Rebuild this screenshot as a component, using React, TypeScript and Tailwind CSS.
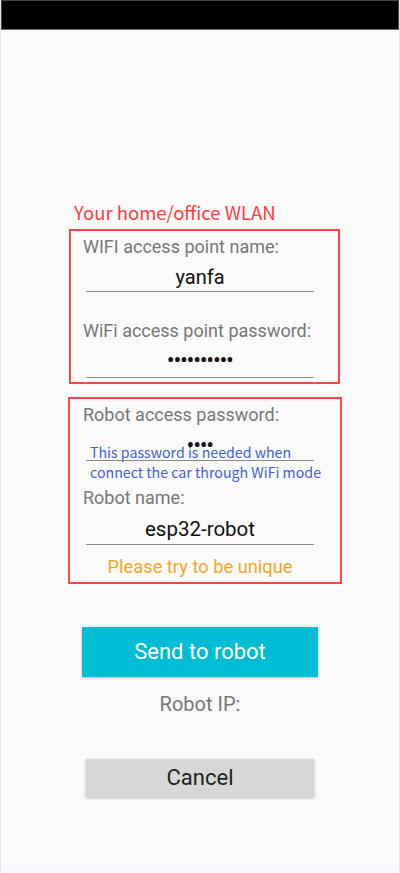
import React from "react";

export default function App() {
  return (
    <div className="w-[400px] h-[873px] bg-[#fafafa] flex flex-col border-x border-[#e4e4e4] overflow-hidden" style={{ fontFamily: "Roboto, 'Noto Sans', sans-serif" }}>
      <div className="h-[30px] shrink-0 bg-black border-t border-x border-[#444] border-b border-b-[#6e6e6e]" />
      <div className="flex-1 flex flex-col">
        <div
          className="mt-[171px] ml-[73px] h-[22px] leading-[22px] text-[18.5px] text-[#ff3c3c]"
          style={{ fontFamily: "'Noto Sans CJK SC', 'Noto Sans', sans-serif" }}
        >
          Your home/office WLAN
        </div>
        <div className="mt-[6px] ml-[68px] w-[271px] border-2 border-[#ff4444] flex flex-col px-[12px] pt-[4px] pb-[4px]">
          <div className="h-[24px] leading-[24px] text-[18px] text-[#777]">WIFI access point name:</div>
          <div className="mt-[4px] ml-[3px] w-[228px] h-[29px] leading-[28px] border-b border-[#8a8a8a] text-center text-[20px] text-[#111]">yanfa</div>
          <div className="mt-[27px] h-[24px] leading-[24px] text-[18px] text-[#777]">WiFi access point password:</div>
          <div className="mt-[1px] ml-[3px] w-[228px] h-[34px] border-b border-[#8a8a8a] flex items-center justify-center pb-[1px]">
            <span className="text-[20px] leading-[20px] text-[#111] tracking-[-0.6px] font-bold">••••••••••</span>
          </div>
        </div>
        <div className="mt-[13px] ml-[67px] w-[274px] border-2 border-[#ff4444] flex flex-col px-[13px] pt-[4px] pb-[3px]">
          <div className="h-[24px] leading-[24px] text-[18px] text-[#777]">Robot access password:</div>
          <div className="relative ml-[3px] w-[228px] h-[34px] border-b border-[#8a8a8a] flex justify-center">
            <span className="mt-[8px] text-[20px] leading-[20px] text-[#111] font-bold tracking-[-0.6px]">••••</span>
            <div
              className="absolute left-[4px] top-[15px] w-[260px] text-[14.2px] leading-[20px] text-[#3f5fda]"
              style={{ fontFamily: "'Noto Sans CJK SC', 'Noto Sans', sans-serif" }}
            >
              This password is needed when
              <br />
              connect the car through WiFi mode
            </div>
          </div>
          <div className="mt-[25px] h-[24px] leading-[24px] text-[18px] text-[#777]">Robot name:</div>
          <div className="mt-[5px] ml-[3px] w-[228px] h-[30px] leading-[28px] border-b border-[#8a8a8a] text-center text-[20.5px] text-[#111]">esp32-robot</div>
          <div className="mt-[10px] ml-[3px] w-[228px] h-[24px] leading-[24px] text-center text-[18.3px] text-[#f6a623]">Please try to be unique</div>
        </div>
        <div className="mt-[43px] ml-[81px] w-[236px] h-[50px] bg-[#00bcd4] shadow-[0_1px_3px_rgba(0,0,0,0.25)] flex items-center justify-center text-white text-[22px] leading-[50px]">
          Send to robot
        </div>
        <div className="mt-[14px] h-[26px] leading-[26px] text-center text-[20px] text-[#777]">Robot IP:</div>
        <div className="mt-[42px] ml-[85px] w-[228px] h-[38px] bg-[#d6d7d7] shadow-[0_1px_3px_rgba(0,0,0,0.25)] flex items-center justify-center text-[#222] text-[22px] leading-[38px]">
          Cancel
        </div>
        <div className="flex-1" />
      </div>
      <div className="h-[7px] shrink-0 bg-[#f6f8fd] -mx-px" />
    </div>
  );
}
